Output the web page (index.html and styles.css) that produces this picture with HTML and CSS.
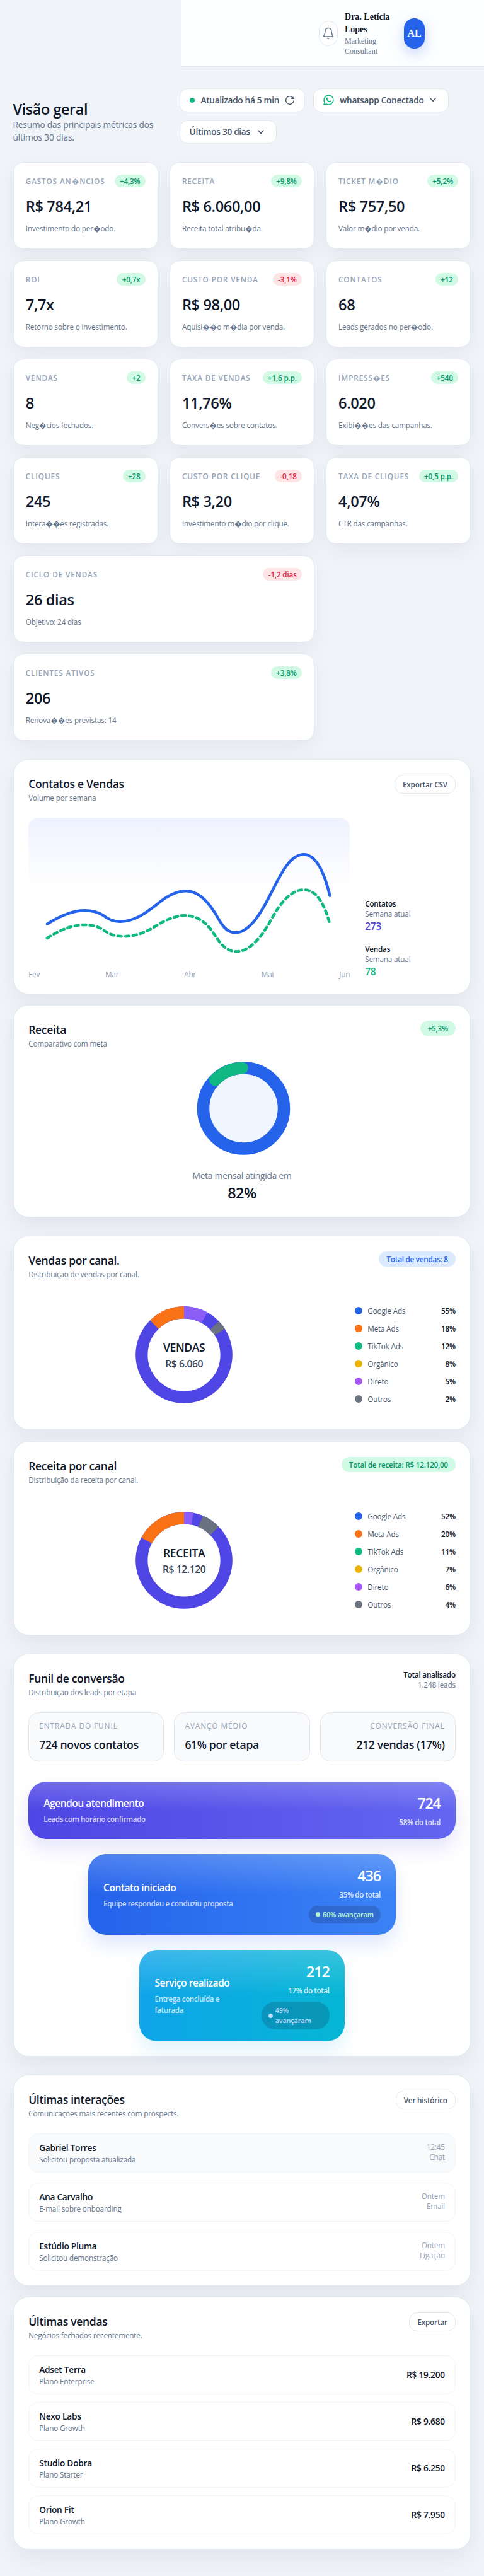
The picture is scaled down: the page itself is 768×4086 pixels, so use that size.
FILE: index.html
```html
<!DOCTYPE html>
<html lang="pt-BR">
<head>
<meta charset="utf-8">
<title>Visão geral</title>
<link rel="stylesheet" href="styles.css">
</head>
<body>
<header class="topbar">
  <button class="bell" aria-label="Notificações">
    <svg width="18" height="20" viewBox="0 0 18 20" fill="none" stroke="#64748b" stroke-width="1.5" stroke-linejoin="round" stroke-linecap="round"><path d="M9 1.4C5.9 1.4 4.1 3.6 4 6.600C3.900 9.500 3.600 12 1.500 14.900H16.500C14.400 12 14.100 9.500 14 6.600C13.900 3.600 12.100 1.400 9 1.400Z"/><path d="M7.400 17.500H10.600L9 19Z" fill="#64748b" stroke-width="1"/></svg>
  </button>
  <div class="user"><div class="user-name">Dra. Letícia Lopes</div><div class="user-role">Marketing Consultant</div></div>
  <div class="avatar">AL</div>
</header>

<main class="page">
  <section class="intro">
    <div class="intro-text"><h1>Visão geral</h1><p>Resumo das principais métricas dos últimos 30 dias.</p></div>
    <div class="filters">
      <button class="chip chip-status"><i class="online"></i><span>Atualizado há 5 min</span>
        <svg width="14" height="16" viewBox="0 0 14 16" fill="none" stroke="#475569" stroke-width="1.400" stroke-linecap="round" stroke-linejoin="round"><path d="M12.600 5.200A6.300 6.300 0 1 0 13.200 8.600"/><path d="M13.200 1.700V5.300H9.600"/></svg>
      </button>
      <button class="chip chip-whats">
        <svg width="17" height="17" viewBox="0 0 17 17" fill="none" stroke="#10b981" stroke-width="1.500" stroke-linejoin="round"><path d="M1 16L2.100 12.200A7.400 7.400 0 1 1 5 15Z"/><path d="M5.400 4.700C6 4.200 6.500 4.400 6.700 4.900L7.200 6.100C7.300 6.500 6.700 6.900 6.600 7.200C7.200 8.500 8.200 9.500 9.500 10.100C9.900 10 10.200 9.300 10.600 9.300L12 10C12.400 10.200 12.400 10.700 12 11.300C11.200 12.300 9.800 12.200 8.400 11.500C6.800 10.700 5.600 9.400 4.900 7.900C4.400 6.700 4.500 5.500 5.400 4.700Z" fill="#10b981" stroke="none"/></svg>
        <span>whatsapp Conectado</span>
        <svg class="caret" width="10" height="7" viewBox="0 0 10 7" fill="none" stroke="#475569" stroke-width="1.500" stroke-linecap="round" stroke-linejoin="round"><path d="M1 1L5 5.400L9 1"/></svg>
      </button>
      <button class="chip chip-range"><span>Últimos 30 dias</span>
        <svg class="caret" width="10" height="7" viewBox="0 0 10 7" fill="none" stroke="#475569" stroke-width="1.500" stroke-linecap="round" stroke-linejoin="round"><path d="M1 1L5 5.400L9 1"/></svg>
      </button>
    </div>
  </section>

  <section class="metrics">
    <article class="metric"><div class="metric-top"><span class="label">Gastos An�ncios</span><span class="delta up">+4,3%</span></div><div class="value">R$ 784,21</div><p class="note">Investimento do per�odo.</p></article>
    <article class="metric"><div class="metric-top"><span class="label">Receita</span><span class="delta up">+9,8%</span></div><div class="value">R$ 6.060,00</div><p class="note">Receita total atribu�da.</p></article>
    <article class="metric"><div class="metric-top"><span class="label">Ticket M�dio</span><span class="delta up">+5,2%</span></div><div class="value">R$ 757,50</div><p class="note">Valor m�dio por venda.</p></article>
    <article class="metric"><div class="metric-top"><span class="label">ROI</span><span class="delta up">+0,7x</span></div><div class="value">7,7x</div><p class="note">Retorno sobre o investimento.</p></article>
    <article class="metric"><div class="metric-top"><span class="label">Custo por venda</span><span class="delta down">-3,1%</span></div><div class="value">R$ 98,00</div><p class="note">Aquisi��o m�dia por venda.</p></article>
    <article class="metric"><div class="metric-top"><span class="label">Contatos</span><span class="delta up">+12</span></div><div class="value">68</div><p class="note">Leads gerados no per�odo.</p></article>
    <article class="metric"><div class="metric-top"><span class="label">Vendas</span><span class="delta up">+2</span></div><div class="value">8</div><p class="note">Neg�cios fechados.</p></article>
    <article class="metric"><div class="metric-top"><span class="label">Taxa de vendas</span><span class="delta up">+1,6 p.p.</span></div><div class="value">11,76%</div><p class="note">Convers�es sobre contatos.</p></article>
    <article class="metric"><div class="metric-top"><span class="label">Impress�es</span><span class="delta up">+540</span></div><div class="value">6.020</div><p class="note">Exibi��es das campanhas.</p></article>
    <article class="metric"><div class="metric-top"><span class="label">Cliques</span><span class="delta up">+28</span></div><div class="value">245</div><p class="note">Intera��es registradas.</p></article>
    <article class="metric"><div class="metric-top"><span class="label">Custo por clique</span><span class="delta down">-0,18</span></div><div class="value">R$ 3,20</div><p class="note">Investimento m�dio por clique.</p></article>
    <article class="metric"><div class="metric-top"><span class="label">Taxa de cliques</span><span class="delta up">+0,5 p.p.</span></div><div class="value">4,07%</div><p class="note">CTR das campanhas.</p></article>
    <article class="metric wide"><div class="metric-top"><span class="label">Ciclo de vendas</span><span class="delta down">-1,2 dias</span></div><div class="value">26 dias</div><p class="note">Objetivo: 24 dias</p></article>
    <article class="metric wide"><div class="metric-top"><span class="label">Clientes ativos</span><span class="delta up">+3,8%</span></div><div class="value">206</div><p class="note">Renova��es previstas: 14</p></article>
  </section>

  <section class="group">
    <article class="panel panel-trend">
      <div class="panel-head"><div><h2>Contatos e Vendas</h2><p>Volume por semana</p></div><button class="outline">Exportar CSV</button></div>
      <div class="trend">
        <div class="trend-chart">
          <svg class="trend-svg" viewBox="0 0 510 240">
            <defs><linearGradient id="sky" x1="0" y1="0" x2="0" y2="1"><stop offset="0" stop-color="#eef2ff"/><stop offset="1" stop-color="#eef2ff" stop-opacity="0"/></linearGradient></defs>
            <rect width="510" height="112" rx="16" fill="url(#sky)"/>
            <g fill="none" stroke-width="4.500" stroke-linecap="round">
              <path stroke="#2563eb" d="M30 168.700C50 156 70 147.300 89.200 147.300C101 147.300 110 149.500 118.600 154.700C127 161.500 134 164.700 146.500 164.700C168 164.700 187 151 204.300 137.300C220 124 235 116.300 250.300 116.300C269 116.300 284 132 295.900 150.700C305 166 312 182.300 328.200 182.300C352 182.300 371 148 385.500 119C402 86 416 58.300 437 58.300C458 58.300 471 93 478.500 123.700"/>
              <path stroke="#10b981" stroke-dasharray="6 6" d="M30 191C50 178 70 170 89.200 170C101 170 110 172.500 118.600 177.700C128 184.500 137 188.300 150.400 188.300C170 188.300 186 182 201.800 172C218 162 233 155.300 248.400 155.300C267 155.300 281 165 292.500 181.300C303 197 312 212.300 330.200 212.300C352 212.300 371 188 385.500 161.300C401 133 418 114.300 437 114.300C458 114.300 470 138 478.500 169"/>
            </g>
          </svg>
          <div class="months"><span>Fev</span><span>Mar</span><span>Abr</span><span>Mai</span><span>Jun</span></div>
        </div>
        <div class="trend-stats">
          <div><strong>Contatos</strong><span>Semana atual</span><b class="indigo">273</b></div>
          <div><strong>Vendas</strong><span>Semana atual</span><b class="green">78</b></div>
        </div>
      </div>
    </article>

    <article class="panel panel-goal">
      <div class="panel-head"><div><h2>Receita</h2><p>Comparativo com meta</p></div><span class="pill pill-green">+5,3%</span></div>
      <div class="goal">
        <svg class="goal-svg" width="160" height="160" viewBox="-80 -80 160 160"><circle r="64" cx="2.500" fill="#eff6ff" stroke="#2563eb" stroke-width="19.500"/><path d="M-42.500 -45A64 64 0 0 1 0.300 -64" fill="none" stroke="#10b981" stroke-width="19" stroke-linecap="round"/></svg>
        <p>Meta mensal atingida em</p><strong>82%</strong>
      </div>
    </article>
  </section>

  <section class="group">
    <article class="panel panel-channel">
      <div class="panel-head"><div><h2>Vendas por canal.</h2><p>Distribuição de vendas por canal.</p></div><span class="pill pill-blue">Total de vendas: 8</span></div>
      <div class="channel">
        <div class="ring">
          <svg width="154" height="154" viewBox="-77 -77 154 154"><g fill="none" stroke-width="19.200" transform="rotate(-90)"><circle r="67.200" stroke="#4f46e5"/><circle r="67.200" stroke="#8b5cf6" pathLength="360" stroke-dasharray="28.800 360"/><circle r="67.200" stroke="#6b7280" pathLength="360" stroke-dasharray="11.500 360" stroke-dashoffset="-46"/><circle r="67.200" stroke="#f97316" pathLength="360" stroke-dasharray="44.500 360" stroke-dashoffset="-315.500"/></g></svg>
          <div class="ring-text"><strong>VENDAS</strong><span>R$ 6.060</span></div>
        </div>
        <ul class="legend">
          <li><i class="c-blue"></i><span>Google Ads</span><b>55%</b></li><li><i class="c-orange"></i><span>Meta Ads</span><b>18%</b></li><li><i class="c-green"></i><span>TikTok Ads</span><b>12%</b></li><li><i class="c-yellow"></i><span>Orgânico</span><b>8%</b></li><li><i class="c-purple"></i><span>Direto</span><b>5%</b></li><li><i class="c-gray"></i><span>Outros</span><b>2%</b></li>
        </ul>
      </div>
    </article>
    <article class="panel panel-channel">
      <div class="panel-head"><div><h2>Receita por canal</h2><p>Distribuição da receita por canal.</p></div><span class="pill pill-green">Total de receita: R$ 12.120,00</span></div>
      <div class="channel">
        <div class="ring">
          <svg width="154" height="154" viewBox="-77 -77 154 154"><g fill="none" stroke-width="19.200" transform="rotate(-90)"><circle r="67.200" stroke="#4f46e5"/><circle r="67.200" stroke="#8b5cf6" pathLength="360" stroke-dasharray="11.400 360"/><circle r="67.200" stroke="#6b7280" pathLength="360" stroke-dasharray="23 360" stroke-dashoffset="-23"/><circle r="67.200" stroke="#f97316" pathLength="360" stroke-dasharray="62 360" stroke-dashoffset="-298"/></g></svg>
          <div class="ring-text"><strong>RECEITA</strong><span>R$ 12.120</span></div>
        </div>
        <ul class="legend">
          <li><i class="c-blue"></i><span>Google Ads</span><b>52%</b></li><li><i class="c-orange"></i><span>Meta Ads</span><b>20%</b></li><li><i class="c-green"></i><span>TikTok Ads</span><b>11%</b></li><li><i class="c-yellow"></i><span>Orgânico</span><b>7%</b></li><li><i class="c-purple"></i><span>Direto</span><b>6%</b></li><li><i class="c-gray"></i><span>Outros</span><b>4%</b></li>
        </ul>
      </div>
    </article>
  </section>

  <section class="group">
    <article class="panel panel-funnel">
      <div class="panel-head"><div><h2>Funil de conversão</h2><p>Distribuição dos leads por etapa</p></div><div class="total"><strong>Total analisado</strong><span>1.248 leads</span></div></div>
      <div class="stats">
        <div class="stat"><span class="label">Entrada do funil</span><strong>724 novos contatos</strong></div>
        <div class="stat"><span class="label">Avanço médio</span><strong>61% por etapa</strong></div>
        <div class="stat stat-end"><span class="label">Conversão final</span><strong>212 vendas (17%)</strong></div>
      </div>
      <div class="funnel">
        <div class="step step-indigo"><div class="step-info"><h3>Agendou atendimento</h3><p>Leads com horário confirmado</p></div><div class="step-data"><strong>724</strong><span>58% do total</span></div></div>
        <div class="step step-blue"><div class="step-info"><h3>Contato iniciado</h3><p>Equipe respondeu e conduziu proposta</p></div><div class="step-data"><strong>436</strong><span>35% do total</span><em class="advance mint"><i></i>60% avançaram</em></div></div>
        <div class="step step-cyan"><div class="step-info"><h3>Serviço realizado</h3><p>Entrega concluída e faturada</p></div><div class="step-data"><strong>212</strong><span>17% do total</span><em class="advance ice"><i></i>49%<br>avançaram</em></div></div>
      </div>
    </article>
  </section>

  <section class="group">
    <article class="panel panel-contacts">
      <div class="panel-head"><div><h2>Últimas interações</h2><p>Comunicações mais recentes com prospects.</p></div><button class="outline">Ver histórico</button></div>
      <div class="list">
        <div class="row row-active"><div><h4>Gabriel Torres</h4><p>Solicitou proposta atualizada</p></div><div class="when">12:45<br>Chat</div></div>
        <div class="row"><div><h4>Ana Carvalho</h4><p>E-mail sobre onboarding</p></div><div class="when">Ontem<br>Email</div></div>
        <div class="row"><div><h4>Estúdio Pluma</h4><p>Solicitou demonstração</p></div><div class="when">Ontem<br>Ligação</div></div>
      </div>
    </article>
    <article class="panel panel-sales">
      <div class="panel-head"><div><h2>Últimas vendas</h2><p>Negócios fechados recentemente.</p></div><button class="outline">Exportar</button></div>
      <div class="list list-tight">
        <div class="row row-sale"><div><h4>Adset Terra</h4><p>Plano Enterprise</p></div><b>R$ 19.200</b></div>
        <div class="row row-sale"><div><h4>Nexo Labs</h4><p>Plano Growth</p></div><b>R$ 9.680</b></div>
        <div class="row row-sale"><div><h4>Studio Dobra</h4><p>Plano Starter</p></div><b>R$ 6.250</b></div>
        <div class="row row-sale"><div><h4>Orion Fit</h4><p>Plano Growth</p></div><b>R$ 7.950</b></div>
      </div>
    </article>
  </section>
</main>
</body>
</html>
```
FILE: styles.css
```css
*{box-sizing:border-box}
body{margin:0;background:#f0f4f9;color:#0f172a;font-family:"Open Sans","Noto Sans",sans-serif;font-size:13.700px;line-height:20px;letter-spacing:-.012em}
h1,h2,h3,h4,p,ul{margin:0;padding:0;font-weight:400}
h1,h2,h3,h4,strong,b{font-weight:540;letter-spacing:-.018em}
p,.note,.total span,.legend span{letter-spacing:-.013em}
ul{list-style:none}
button{font:inherit;color:inherit;cursor:pointer}
svg{display:block;flex:none}

.topbar{margin-left:288px;height:106px;background:#fdfeff;border-bottom:1px solid #e2e8f0;display:flex;align-items:center;justify-content:flex-end;padding-right:94px;font-family:"Liberation Serif",serif;letter-spacing:0}
.bell{width:30px;height:40px;padding:0;border:1px solid #e2e8f0;border-radius:15px;background:#fff;display:flex;align-items:center;justify-content:center}
.user{width:94px;margin-left:11px;padding-right:10px}
.user-name{font-size:14px;line-height:20px;font-weight:700}
.user-role{font-size:12px;line-height:16px;color:#64748b}
.avatar{width:33px;height:48px;border-radius:16px;background:#2563eb;color:#fff;font-weight:700;font-size:16px;display:flex;align-items:center;justify-content:center;box-shadow:0 8px 20px rgba(37,99,235,.25)}

.page{padding:34px 20.600px 41px}
.intro{display:flex;align-items:center;margin-bottom:28.600px}
.intro-text{width:264px;padding:18px 20px 0 0}
h1{font-size:23.400px;line-height:30px}
.intro-text p{color:#64748b;font-size:13.700px}
.filters{flex:1;display:flex;flex-wrap:wrap;gap:13px}
.chip{height:37.200px;border:1px solid #e2e8f0;border-radius:12px;background:#fff;color:#475569;font-size:13.600px;font-weight:540;letter-spacing:-.02em;display:flex;align-items:center;padding:0 15px;white-space:nowrap}
.chip-status{width:199.500px;justify-content:space-between;padding-right:16px}
.chip-whats{width:214.500px;justify-content:space-between;padding-right:19px}
.chip-range{width:154.500px;justify-content:space-between;padding-right:19px}
.online{width:8px;height:8px;border-radius:50%;background:#10b981}

.metrics{display:grid;grid-template-columns:repeat(3,1fr);gap:17.600px}
.metric{height:138.400px;padding:19.200px;background:#fff;border:1px solid #e2e8f0;border-radius:16px;box-shadow:0 12px 30px rgba(15,23,42,.05)}
.wide{grid-column:1/3}
.metric-top{display:flex;justify-content:space-between;align-items:center;height:20px}
.label{font-size:11.700px;line-height:16px;font-weight:540;color:#94a3b8;text-transform:uppercase;letter-spacing:.9px;white-space:nowrap}
.delta{height:20px;line-height:20px;padding:0 8.400px;border-radius:10px;font-size:11.700px;font-weight:540;white-space:nowrap}
.up{background:#d1fae5;color:#059669}
.down{background:#ffe4e6;color:#e11d48}
.value{margin-top:14px;font-size:23.600px;line-height:32px;font-weight:540;letter-spacing:-.016em}
.note{margin-top:10px;font-size:11.700px;line-height:18px;color:#64748b}

.group{display:grid;gap:17.600px;margin-top:29.200px}
.panel{background:#fff;border:1px solid #e2e8f0;border-radius:24px;padding:24px 23.600px;box-shadow:0 16px 34px rgba(15,23,42,.06)}
.panel-head{display:flex;justify-content:space-between;align-items:flex-start;height:44px;margin-bottom:24px}
h2{font-size:17.500px;line-height:28px}
.panel-head p{font-size:11.700px;line-height:16px;color:#64748b}
.outline{height:30px;border:1px solid #e2e8f0;border-radius:13px;background:#fff;color:#475569;font-size:11.700px;font-weight:540;letter-spacing:-.016em;padding:0 12px;line-height:28px}
.pill{height:24px;line-height:24px;border-radius:12px;padding:0 12px;font-size:11.700px;font-weight:540;letter-spacing:-.02em}
.pill-green{background:#d1fae5;color:#059669}
.pill-blue{background:#dbeafe;color:#2563eb}

.panel-trend{height:372.800px}
.trend{display:grid;grid-template-columns:510px 1fr;column-gap:24px}
.trend-svg{width:510px;height:240px}
.months{display:flex;justify-content:space-between;font-size:11.700px;line-height:16px;color:#94a3b8}
.trend-stats{align-self:end;display:grid;gap:16px}
.trend-stats strong,.trend-stats span,.trend-stats b{display:block;font-size:11.700px;line-height:16px}
.trend-stats span{color:#64748b}
.trend-stats b{font-size:15.600px;line-height:24px}
.trend-stats .indigo{color:#4f46e5}
.trend-stats .green{color:#10b981}

.panel-goal{height:336.300px}
.goal{display:flex;flex-direction:column;align-items:center}
.goal-svg{margin-top:-9px}
.goal p{color:#64748b;margin-top:17px}
.goal strong{font-size:23.400px;line-height:32px;margin-top:1px}

.panel-channel{height:308.300px}
.channel{display:flex;align-items:center;height:190.500px;padding-left:170px;justify-content:space-between}
.ring{display:grid;place-items:center;margin-top:2px}
.ring>*{grid-area:1/1}
.ring-text{text-align:center;display:grid}
.ring-text strong{font-size:17.500px;line-height:28px}
.ring-text span{font-size:15.600px;line-height:24px;font-weight:540;letter-spacing:-.025em;color:#334155}
.legend{width:159.500px;display:grid;gap:12px;margin-top:2px}
.legend li{display:flex;align-items:center;font-size:11.700px;line-height:16px}
.legend i{width:12px;height:12px;border-radius:50%;margin-right:8px}
.legend span{color:#475569}
.legend b{margin-left:auto}
.c-blue{background:#2563eb}.c-orange{background:#f97316}.c-green{background:#10b981}.c-yellow{background:#eab308}.c-purple{background:#a855f7}.c-gray{background:#6b7280}

.panel-funnel{height:638.800px}
.total{text-align:right;font-size:11.700px;line-height:16px;display:grid}
.total span{color:#64748b}
.stats{display:grid;grid-template-columns:repeat(3,1fr);gap:16px}
.stat{height:77.400px;padding:12px 16px;border:1px solid #e2e8f0;border-radius:16px;background:#f8fafc;display:flex;flex-direction:column}
.stat strong{font-size:17.500px;line-height:28px;margin-top:8px;white-space:nowrap}
.stat-end{align-items:flex-end}
.stat .label{font-weight:400;letter-spacing:1px}
.funnel{margin-top:32.300px;display:flex;flex-direction:column;align-items:center;gap:24px}
.step{display:flex;justify-content:space-between;align-items:center;border-radius:28px;padding:0 24px;color:#fff}
.step-indigo{width:100%;height:90.700px;background:linear-gradient(180deg,rgba(255,255,255,.2),rgba(255,255,255,0) 50%),linear-gradient(90deg,#4f46e5,#6366f1);box-shadow:0 16px 28px rgba(79,70,229,.14)}
.step-blue{width:72%;height:128px;background:linear-gradient(180deg,rgba(255,255,255,.2),rgba(255,255,255,0) 50%),linear-gradient(90deg,#2563eb,#3b82f6);box-shadow:0 16px 28px rgba(37,99,235,.14)}
.step-cyan{width:48%;height:145px;background:linear-gradient(180deg,rgba(255,255,255,.2),rgba(255,255,255,0) 50%),linear-gradient(90deg,#0ea5e9,#06b6d4);box-shadow:0 16px 28px rgba(14,165,233,.12)}
.step h3{font-size:15.600px;line-height:24px;white-space:nowrap;font-weight:600;letter-spacing:-.032em}
.step p{margin-top:4px;font-size:11.700px;line-height:18px;font-weight:600;letter-spacing:-.035em;color:rgba(255,255,255,.75)}
.step-cyan p{width:116px}
.step-data{display:flex;flex-direction:column;align-items:flex-end}
.step-data strong{font-size:23.400px;line-height:32px;font-weight:600;letter-spacing:-.05em}
.step-data span{margin-top:6px;font-size:11.700px;line-height:16px;font-weight:600;letter-spacing:-.035em;color:rgba(255,255,255,.85)}
.advance{margin-top:10px;display:flex;align-items:center;gap:4px;padding:6px 11px;border-radius:22px;background:rgba(15,23,42,.18);font-style:normal;font-size:10.800px;line-height:16px;font-weight:600;letter-spacing:-.01em}
.advance i{width:7px;height:7px;border-radius:50%;background:currentColor}
.mint{color:#bbf7d0}
.ice{color:#bfdbfe;width:108px}

.panel-contacts{height:334.500px}
.list{display:grid;gap:16.200px}
.list-tight{gap:12.300px}
.row{height:61.700px;display:flex;justify-content:space-between;padding:12px 16px;border:1px solid #f1f5f9;border-radius:16px}
.row-active{background:#f8fafc}
.row-sale{align-items:center}
.row p{font-size:11.700px;line-height:16px;color:#64748b}
.when{text-align:right;font-size:11.700px;line-height:16px;color:#94a3b8}
.panel-sales{height:401px}
```
